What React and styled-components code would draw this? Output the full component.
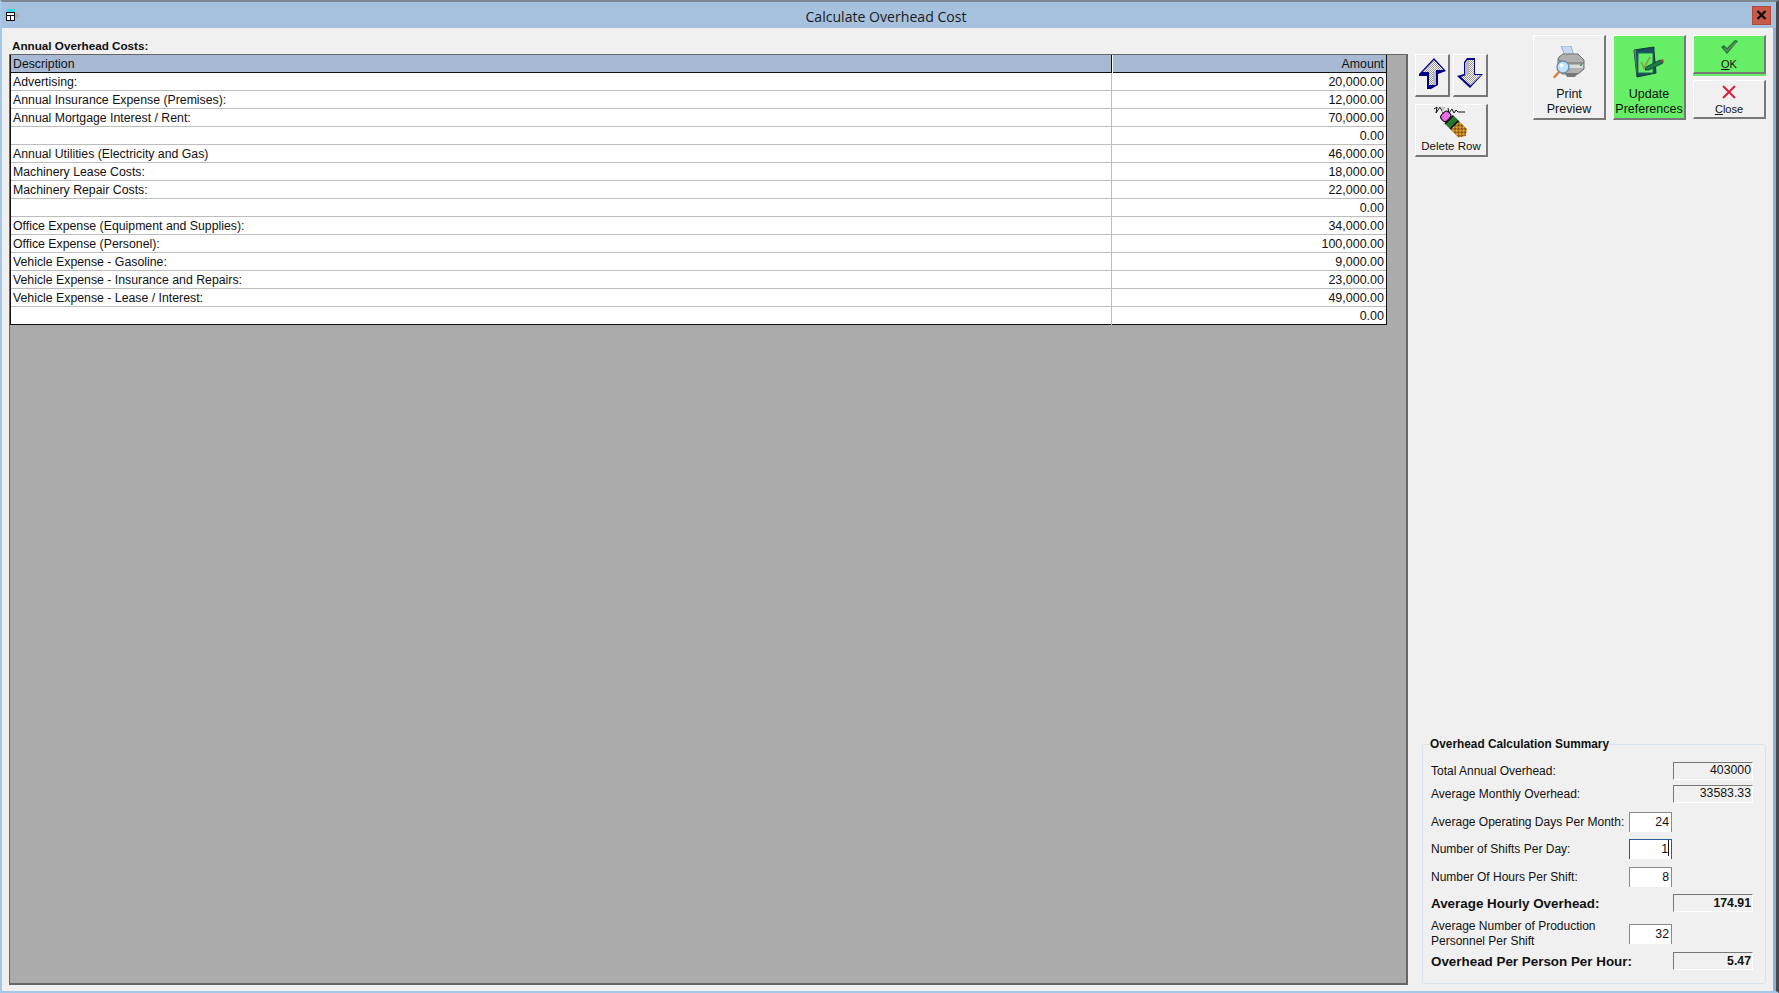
import React from 'react';
import styled, {createGlobalStyle, css} from 'styled-components';

const GlobalStyle = createGlobalStyle`
    html, body {
        margin: 0;
        padding: 0;
        background: #f0f0f0;
    }
    body {
        font-family: "Liberation Sans", Arial, sans-serif;
        font-size: 12.3px;
        color: #111;
    }
`;

const Window = styled.div`
    width: 1779px;
    height: 993px;
    box-sizing: border-box;
    display: flex;
    flex-direction: column;
    overflow: hidden;
    background: #f0f0f0;
    border-top: 2px solid #7f8790;
    border-left: 2px solid #a6c8e8;
    border-right: 3px solid #454a50;
    border-bottom: 2px solid #a6c8e8;
`;

const TitleBar = styled.header`
    height: 26px;
    flex: none;
    display: flex;
    align-items: center;
    background: #a6c1dd;
    padding: 0 5px 0 3px;
`;

const Title = styled.h1`
    flex: 1;
    margin: 0;
    padding-top: 2px;
    text-align: center;
    font-family: "Open Sans", "Noto Sans", sans-serif;
    font-size: 14.1px;
    font-weight: 400;
    color: #1a1a1a;
`;

const CloseBox = styled.div`
    width: 19px;
    height: 19px;
    box-sizing: border-box;
    display: flex;
    align-items: center;
    justify-content: center;
    background: #c75a48;
    border: 1px solid #b04a3c;
`;

const Body = styled.div`
    flex: 1;
    min-height: 0;
    display: flex;
    padding: 0 7px 6px 7px;
    gap: 7px;
    border-right: 3px solid #8fb0d4;
`;

const LeftColumn = styled.section`
    width: 1399px;
    flex: none;
    display: flex;
    flex-direction: column;
`;

const SectionLabel = styled.div`
    margin: 11px 0 1px 3px;
    height: 14px;
    line-height: 14px;
    font-size: 11.7px;
    font-weight: bold;
`;

const GridPanel = styled.div`
    flex: 1;
    box-sizing: border-box;
    background: #ababab;
    border: 1px solid #666;
    border-right-width: 2px;
    border-bottom-width: 2px;
`;

const Table = styled.div`
    width: 1377px;
    box-sizing: border-box;
    border-left: 1px solid #111;
    border-right: 1px solid #111;
    background: #fff;
`;

const HeaderRow = styled.div`
    display: grid;
    grid-template-columns: 1101px 1fr;
    height: 18px;
    box-sizing: border-box;
    border-bottom: 1px solid #111;
    background: #a7b9d3;
    line-height: 18px;
`;

const HeaderCell = styled.div`
    padding: 0 2px;
    text-align: ${p => (p.$right ? 'right' : 'left')};
    ${p => !p.$right && css`
        border-right: 1px solid #111;
        box-shadow: 1px 0 0 #fff;
    `}
`;

const DataRow = styled.div`
    display: grid;
    grid-template-columns: 1101px 1fr;
    height: 18px;
    box-sizing: border-box;
    border-bottom: 1px solid #bdbdbd;
    line-height: 18px;

    &:last-child {
        border-bottom-color: #111;
    }
`;

const Cell = styled.div`
    padding: 0 2px;
    text-align: ${p => (p.$right ? 'right' : 'left')};
    font-size: ${p => (p.$right ? '12.5px' : '12.3px')};
    ${p => !p.$right && css`
        border-right: 1px solid #bdbdbd;
    `}
`;

const RightColumn = styled.aside`
    flex: 1;
    display: flex;
    flex-direction: column;
    justify-content: space-between;
    padding-top: 7px;
`;

const Toolbar = styled.div`
    display: flex;
    align-items: flex-start;
`;

const EditTools = styled.div`
    margin-top: 19px;
    width: 73px;
    display: flex;
    flex-wrap: wrap;
    gap: 7px 3px;
`;

const MainTools = styled.div`
    margin-left: 45px;
    display: flex;
    gap: 7px;
`;

const ButtonStack = styled.div`
    display: flex;
    flex-direction: column;
    gap: 6px;
`;

const Button = styled.button`
    width: ${p => p.$w}px;
    height: ${p => p.$h}px;
    box-sizing: border-box;
    padding: 0 0 ${p => p.$pb ?? 1}px;
    display: flex;
    flex-direction: column;
    align-items: center;
    justify-content: flex-end;
    gap: ${p => p.$gap ?? 0}px;
    font-family: inherit;
    font-size: ${p => p.$fs ?? 12.5}px;
    line-height: 15px;
    color: #111;
    background: ${p => (p.$green ? '#66ee66' : '#f0f0f0')};
    border-style: solid;
    border-width: 1px 2px 2px 1px;
    border-color: #fff #777 #777 #fff;
    ${p => p.$strip && css`
        box-shadow: 0 2px 0 #66ee66;
    `}

    svg {
        flex: none;
    }
    u {
        text-decoration: underline;
    }
`;

const Summary = styled.fieldset`
    margin: 0 0 1px 7px;
    padding: 11px 11px 13px 8px;
    border: 1px solid #dbe3ea;
    border-radius: 3px;
    min-inline-size: 0;
`;

const Legend = styled.legend`
    margin-left: -2px;
    padding: 0 1px;
    font-size: 11.85px;
    font-weight: bold;
    line-height: 13px;
`;

const Row = styled.div`
    display: grid;
    grid-template-columns: 198px 44px 80px;
    align-items: center;
    height: ${p => p.$h}px;
    margin-top: ${p => p.$top ?? 0}px;
`;

const RowLabel = styled.div`
    grid-column: 1;
    line-height: 15px;
    font-size: ${p => (p.$strong ? '13.4px' : '12px')};
    font-weight: ${p => (p.$strong ? 'bold' : 'normal')};
    padding-top: ${p => (p.$strong ? '1px' : '0')};
    white-space: nowrap;
`;

const ReadOnly = styled.div`
    grid-column: 3;
    height: 18px;
    box-sizing: border-box;
    border-style: solid;
    border-width: 1px;
    border-color: #777 #fff #fff #777;
    text-align: right;
    line-height: ${p => (p.$strong ? '16px' : '15px')};
    padding-right: 1px;
    font-weight: ${p => (p.$strong ? 'bold' : 'normal')};
`;

const Entry = styled.div`
    grid-column: 2;
    height: 20px;
    width: 43px;
    box-sizing: border-box;
    background: #fff;
    border-style: solid;
    border-width: 1px 1px 0 1px;
    border-color: ${p => (p.$focus ? '#2a5c9a' : '#8a8a8a')};
    text-align: right;
    line-height: 19px;
    padding-right: 2px;
`;

const Caret = styled.span`
    display: inline-block;
    width: 1px;
    height: 16px;
    background: #111;
    vertical-align: -3px;
`;

const HiddenDefs = styled.svg`
    position: absolute;
    width: 0;
    height: 0;
`;

const SharedPatterns = () => (
    <HiddenDefs>
        <defs>
            <pattern id="stipple" width="2" height="2" patternUnits="userSpaceOnUse">
                <rect width="2" height="2" fill="#fff" />
                <rect width="1" height="1" fill="#999" />
                <rect x="1" y="1" width="1" height="1" fill="#999" />
            </pattern>
            <pattern id="pencilFill" width="2" height="2" patternUnits="userSpaceOnUse">
                <rect width="2" height="2" fill="#f4d020" />
                <rect width="1" height="1" fill="#222" />
                <rect x="1" y="1" width="1" height="1" fill="#c02020" />
            </pattern>
            <pattern id="pinkFill" width="2" height="2" patternUnits="userSpaceOnUse">
                <rect width="2" height="2" fill="#e850e0" />
                <rect width="1" height="1" fill="#f8c8f8" />
            </pattern>
        </defs>
    </HiddenDefs>
);

const SystemIcon = () => (
    <svg width="15" height="14" viewBox="0 0 15 14">
        <rect x="2" y="1" width="8" height="3" fill="#39d8e0" />
        <rect x="10" y="5" width="4" height="5" fill="#a8b0b8" />
        <rect x="1.500" y="4.500" width="8" height="8" fill="#fff" stroke="#111" />
        <path d="M1.500 7.500h8M5.500 7.500v5" stroke="#111" />
    </svg>
);

const CloseGlyph = () => (
    <svg width="11" height="10" viewBox="0 0 11 10">
        <path d="M1.500 1l8 8M9.500 1l-8 8" stroke="#111" strokeWidth="2.400" />
    </svg>
);

const ArrowUp = () => (
    <svg width="30" height="33" viewBox="0 0 30 33">
        <path d="M17 1l12 13-8 3v11l-7 4h-4V19H2v-2z" fill="#000088" />
        <path d="M17 3l9.500 10H19v15h-7V15H5.500z" fill="url(#stipple)" />
        <path d="M16 15h3v13h-3z" fill="#b8b8b8" />
    </svg>
);

const ArrowDown = () => (
    <svg width="30" height="33" viewBox="0 0 30 33">
        <path d="M12 1h8v16h8L15 31 2 19l7-2V5z" fill="#000088" />
        <path d="M11 18h3V3h5v15h7L15.500 28.500 6 20z" fill="url(#stipple)" />
        <path d="M10 6l2-3h2v15h-4z" fill="#b8b8b8" />
    </svg>
);

const EraserPencil = () => (
    <svg width="40" height="35" viewBox="0 0 40 35">
        <path d="M3 5l3-2-1 6 4-6 3 6" fill="none" stroke="#111" />
        <path d="M9 3l3 1-1 4 3-5" fill="none" stroke="#c4c4c4" strokeWidth="1.300" />
        <path d="M17 4l1 5 3-4 2 4 2-3 2 2h7" fill="none" stroke="#111" />
        <g transform="translate(15.500 13) rotate(-45)">
            <rect x="-5" y="-5" width="10" height="8" rx="3" fill="url(#pinkFill)" stroke="#111" />
            <rect x="-6" y="3" width="12" height="2" fill="#111" />
            <rect x="-6" y="5" width="12" height="5" fill="#1f7a2a" />
            <rect x="-6" y="10" width="12" height="2" fill="#111" />
            <path d="M-6 12H6v11l-6 4-6-4z" fill="url(#pencilFill)" />
        </g>
    </svg>
);

const PrinterIcon = () => (
    <svg width="34" height="33" viewBox="0 0 34 33">
        <path d="M9 0h10l3 10H13z" fill="#c4d9f0" stroke="#8ea6c4" strokeWidth=".8" />
        <path d="M7 11l4-3h15l6 6v9l-6 5H10l-4-4V13z" fill="#b0b0b0" stroke="#707070" />
        <path d="M6 13l5 4h21M11 17v10" fill="none" stroke="#707070" />
        <path d="M12 19h19v3H12z" fill="#dcdcdc" />
        <rect x="28" y="18" width="2" height="2" fill="#4caa4c" />
        <path d="M13 27h13l-3 4H15z" fill="#777" />
        <circle cx="11" cy="21" r="6" fill="#bfe3fb" stroke="#6f8fb0" strokeWidth="1.500" />
        <circle cx="9.500" cy="19.500" r="2" fill="#fff" />
        <path d="M7 26l-4.500 5" stroke="#d87f3a" strokeWidth="2.400" strokeLinecap="round" />
    </svg>
);

const ClipboardIcon = () => (
    <svg width="32" height="33" viewBox="0 0 32 33">
        <path d="M1 4l20-3v4l2 22L4 31z" fill="#17505a" stroke="#16383c" />
        <path d="M1 4l2-1 1 28z" fill="#6a7a6e" />
        <rect x="5" y="7" width="15" height="20" fill="#66ee66" stroke="#1a6a5a" />
        <path d="M8 16l3 6 6-11" fill="none" stroke="#8aa040" strokeWidth="1.600" />
        <path d="M13 21l14-7 3 3-14 7-4 0z" fill="#1a7a4a" stroke="#0f3c30" strokeWidth=".8" />
        <path d="M27 14l3-1 1 3-1 1z" fill="#a44" />
    </svg>
);

const CheckIcon = () => (
    <svg width="17" height="14" viewBox="0 0 17 14">
        <path d="M0 7l3-2 3 3 8-8 3 1L6 14z" fill="#1e7a2e" />
        <path d="M3 8l3 3 9-9" fill="none" stroke="#7a8a7a" strokeWidth="1.200" />
    </svg>
);

const CrossIcon = () => (
    <svg width="14" height="14" viewBox="0 0 14 14">
        <path d="M1 1l12 12M13 1L1 13" stroke="#d81e3a" strokeWidth="2" />
    </svg>
);

const costs = [
    ['Advertising:', '20,000.00'],
    ['Annual Insurance Expense (Premises):', '12,000.00'],
    ['Annual Mortgage Interest / Rent:', '70,000.00'],
    ['', '0.00'],
    ['Annual Utilities (Electricity and Gas)', '46,000.00'],
    ['Machinery Lease Costs:', '18,000.00'],
    ['Machinery Repair Costs:', '22,000.00'],
    ['', '0.00'],
    ['Office Expense (Equipment and Supplies):', '34,000.00'],
    ['Office Expense (Personel):', '100,000.00'],
    ['Vehicle Expense - Gasoline:', '9,000.00'],
    ['Vehicle Expense - Insurance and Repairs:', '23,000.00'],
    ['Vehicle Expense - Lease / Interest:', '49,000.00'],
    ['', '0.00']
];

const renderCosts = (rows) => {
    return rows.map(([description, amount], index) => (
        <DataRow key={index}>
            <Cell>{description}</Cell>
            <Cell $right>{amount}</Cell>
        </DataRow>
    ));
};

export default function App() {
    return (
        <>
            <GlobalStyle />
            <SharedPatterns />
            <Window>
                <TitleBar>
                    <SystemIcon />
                    <Title>Calculate Overhead Cost</Title>
                    <CloseBox><CloseGlyph /></CloseBox>
                </TitleBar>
                <Body>
                    <LeftColumn>
                        <SectionLabel>Annual Overhead Costs:</SectionLabel>
                        <GridPanel>
                            <Table>
                                <HeaderRow>
                                    <HeaderCell>Description</HeaderCell>
                                    <HeaderCell $right>Amount</HeaderCell>
                                </HeaderRow>
                                {renderCosts(costs)}
                            </Table>
                        </GridPanel>
                    </LeftColumn>
                    <RightColumn>
                        <Toolbar>
                            <EditTools>
                                <Button $w={35} $h={43} $pb={5}><ArrowUp /></Button>
                                <Button $w={35} $h={43} $pb={5}><ArrowDown /></Button>
                                <Button $w={73} $h={53} $pb={1} $fs={11.5}>
                                    <EraserPencil />
                                    <span>Delete Row</span>
                                </Button>
                            </EditTools>
                            <MainTools>
                                <Button $w={73} $h={85} $gap={8}>
                                    <PrinterIcon />
                                    <span>Print<br />Preview</span>
                                </Button>
                                <Button $w={73} $h={85} $gap={8} $green>
                                    <ClipboardIcon />
                                    <span>Update<br />Preferences</span>
                                </Button>
                                <ButtonStack>
                                    <Button $w={73} $h={39} $green $strip $pb={0} $gap={3} $fs={11}>
                                        <CheckIcon />
                                        <span><u>O</u>K</span>
                                    </Button>
                                    <Button $w={73} $h={39} $pb={0} $gap={3} $fs={11}>
                                        <CrossIcon />
                                        <span><u>C</u>lose</span>
                                    </Button>
                                </ButtonStack>
                            </MainTools>
                        </Toolbar>
                        <Summary>
                            <Legend>Overhead Calculation Summary</Legend>
                            <Row $h={18}>
                                <RowLabel>Total Annual Overhead:</RowLabel>
                                <ReadOnly>403000</ReadOnly>
                            </Row>
                            <Row $h={18} $top={5}>
                                <RowLabel>Average Monthly Overhead:</RowLabel>
                                <ReadOnly>33583.33</ReadOnly>
                            </Row>
                            <Row $h={20} $top={9}>
                                <RowLabel>Average Operating Days Per Month:</RowLabel>
                                <Entry>24</Entry>
                            </Row>
                            <Row $h={20} $top={7}>
                                <RowLabel>Number of Shifts Per Day:</RowLabel>
                                <Entry $focus>1<Caret /></Entry>
                            </Row>
                            <Row $h={20} $top={8}>
                                <RowLabel>Number Of Hours Per Shift:</RowLabel>
                                <Entry>8</Entry>
                            </Row>
                            <Row $h={18} $top={7}>
                                <RowLabel $strong>Average Hourly Overhead:</RowLabel>
                                <ReadOnly $strong>174.91</ReadOnly>
                            </Row>
                            <Row $h={30} $top={7}>
                                <RowLabel>Average Number of Production<br />Personnel Per Shift</RowLabel>
                                <Entry>32</Entry>
                            </Row>
                            <Row $h={18} $top={3}>
                                <RowLabel $strong>Overhead Per Person Per Hour:</RowLabel>
                                <ReadOnly $strong>5.47</ReadOnly>
                            </Row>
                        </Summary>
                    </RightColumn>
                </Body>
            </Window>
        </>
    );
}
